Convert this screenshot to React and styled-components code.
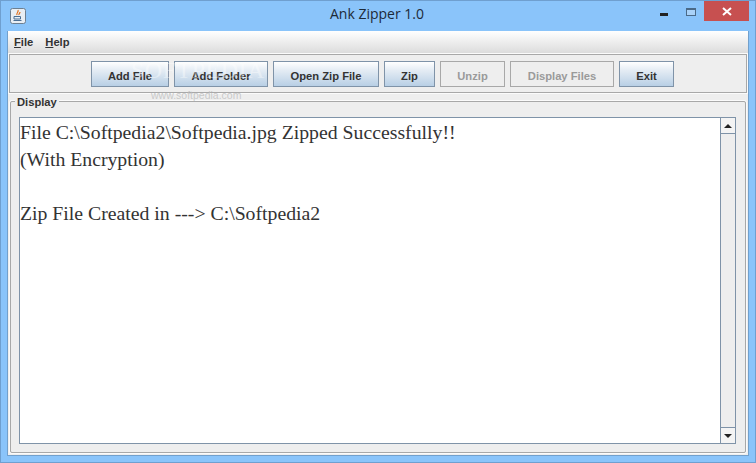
import { createGlobalStyle } from "styled-components";
import styled from "styled-components";

const Global = createGlobalStyle`
  html, body {
    margin: 0;
    padding: 0;
    background: #8ac3f9;
  }
  * {
    box-sizing: border-box;
  }
`;

const Win = styled.div`
  position: relative;
  width: 756px;
  height: 463px;
  display: flex;
  flex-direction: column;
  background: #8ac4fa;
  border: 1px solid #6f9fcf;
  overflow: hidden;
`;
const TitleBar = styled.div`
  position: relative;
  height: 30px;
  flex: none;
  display: flex;
  align-items: center;
  justify-content: center;
  padding: 0 2px 6px 0;
  font-family: "Open Sans", "Liberation Sans", sans-serif;
  font-size: 14px;
  color: #1d2a38;
`;
const AppIcon = styled.svg`
  position: absolute;
  left: 9px;
  top: 7px;
`;
const Controls = styled.div`
  position: absolute;
  right: 6px;
  top: 0;
  display: flex;
  align-items: flex-start;
`;
const Minimize = styled.div`
  width: 8px;
  height: 3px;
  margin: 12px 18px 0 0;
  background: #222;
`;
const Maximize = styled.div`
  width: 10px;
  height: 8px;
  margin: 7px 8px 0 0;
  border: 1px solid #4a6a88;
  border-top-width: 2px;
  background: #a9d2f8;
`;
const Close = styled.div`
  width: 45px;
  height: 20px;
  display: flex;
  align-items: center;
  justify-content: center;
  background: #c75050;
`;
const Content = styled.div`
  flex: 1;
  margin: 0 6px 6px 6px;
  display: flex;
  flex-direction: column;
  background: #eeeeee;
  border: 1px solid #72a0cc;
  font-family: "Liberation Sans", sans-serif;
  border-width: 0 1px 1px 1px;
`;
const MenuBar = styled.div`
  height: 22px;
  flex: none;
  display: flex;
  align-items: center;
  gap: 12px;
  padding-left: 6px;
  background: linear-gradient(#ffffff, #dcdcdc);
`;
const MenuItem = styled.span`
  font-size: 11.2px;
  font-weight: bold;
  color: #333;
  u {
    text-decoration-thickness: 1px;
  }
`;
const ToolBar = styled.div`
  height: 39px;
  flex: none;
  margin: 1px 1px 0 1px;
  display: flex;
  align-items: flex-start;
  gap: 5px;
  padding: 6px 0 0 81px;
  border: 1px solid #a8a8a8;
  box-shadow: 0 0 0 1px #fbfbfb;
`;
const Btn = styled.div`
  width: ${(p) => p.$w}px;
  height: 26px;
  padding-top: 4px;
  display: flex;
  align-items: center;
  justify-content: center;
  font-size: 11.2px;
  font-weight: bold;
  color: ${(p) => (p.$off ? "#9a9a9a" : "#333")};
  border: 1px solid ${(p) => (p.$off ? "#a8a8a8" : "#7f93a8")};
  background: ${(p) =>
    p.$off ? "#eeeeee" : "linear-gradient(#ffffff 0%, #e4ecf4 35%, #b8cfe5 100%)"};
`;
const DisplayBox = styled.div`
  position: relative;
  flex: 1;
  margin: 8px 2px 2px 2px;
  padding: 15px 9px 8px 8px;
  display: flex;
  border: 1px solid #a8a8a8;
  border-radius: 2px;
  box-shadow: 0 0 0 1px #fbfbfb;
`;
const Legend = styled.span`
  position: absolute;
  left: 4px;
  top: -6px;
  padding: 0 2px;
  background: #eeeeee;
  font-size: 11.2px;
  font-weight: bold;
  color: #333;
`;
const TextArea = styled.div`
  flex: 1;
  display: flex;
  background: #fff;
  border: 1px solid #7f93a8;
  border-width: 1px 0 1px 1px;
`;
const Editor = styled.div`
  flex: 1;
  padding-top: 1px;
  font-family: "Liberation Serif", serif;
  font-size: 19.75px;
  line-height: 27px;
  color: #333;
  white-space: pre;
`;
const ScrollBar = styled.div`
  width: 16px;
  display: flex;
  flex-direction: column;
  background: #eeeeee;
  border: 1px solid #7f93a8;
  border-width: 0 1px 0 1px;
`;
const ScrollBtn = styled.div`
  height: 16px;
  flex: none;
  display: flex;
  align-items: center;
  justify-content: center;
  background: #f4f4f4;
  border-bottom: ${(p) => (p.$top ? "1px solid #7f93a8" : "none")};
  border-top: ${(p) => (p.$top ? "none" : "1px solid #7f93a8")};
`;
const Track = styled.div`
  flex: 1;
`;
const Arrow = styled.div`
  width: 0;
  height: 0;
  border-left: 4px solid transparent;
  border-right: 4px solid transparent;
  ${(p) => (p.$up ? "border-bottom: 4px solid #222;" : "border-top: 4px solid #222;")}
`;
const Watermark = styled.div`
  position: absolute;
  left: 130px;
  top: 56px;
  font-family: "Liberation Serif", serif;
  font-size: 24px;
  letter-spacing: 0.5px;
  color: rgba(255, 255, 255, 0.4);
  pointer-events: none;
`;
const WatermarkUrl = styled.div`
  position: absolute;
  left: 150px;
  top: 88px;
  font-family: "Liberation Sans", sans-serif;
  font-size: 10.5px;
  color: rgba(190, 190, 190, 0.8);
  pointer-events: none;
`;

const buttons = [
  { label: "Add File", w: 78 },
  { label: "Add Folder", w: 94 },
  { label: "Open Zip File", w: 106 },
  { label: "Zip", w: 51 },
  { label: "Unzip", w: 65, off: true },
  { label: "Display Files", w: 104, off: true },
  { label: "Exit", w: 55 },
];

const text = `File C:\\Softpedia2\\Softpedia.jpg Zipped Successfully!!
(With Encryption)

Zip File Created in ---> C:\\Softpedia2`;

export default function App() {
  return (
    <>
      <Global />
      <Win>
        <TitleBar>
          <AppIcon width="16" height="16" viewBox="0 0 16 16">
            <rect x="0.5" y="0.5" width="15" height="15" rx="2" fill="#e8eef4" stroke="#6d7f90" />
            <path d="M8 2c1 2-2 3-1 5M10 4c0 1.500-1.500 2-1 3" stroke="#e0701c" strokeWidth="1.2" fill="none" />
            <path d="M4 8.500h6.500v2.500H4zM3.500 12.500h8" stroke="#4a6f94" strokeWidth="1" fill="none" />
          </AppIcon>
          Ank Zipper 1.0
          <Controls>
            <Minimize />
            <Maximize />
            <Close>
              <svg width="10" height="9" viewBox="0 0 10 9">
                <path d="M1 1l8 7M9 1L1 8" stroke="#fff" strokeWidth="2" />
              </svg>
            </Close>
          </Controls>
        </TitleBar>
        <Content>
          <MenuBar>
            <MenuItem><u>F</u>ile</MenuItem>
            <MenuItem><u>H</u>elp</MenuItem>
          </MenuBar>
          <ToolBar>
            {buttons.map((b) => (
              <Btn key={b.label} $w={b.w} $off={b.off}>{b.label}</Btn>
            ))}
          </ToolBar>
          <DisplayBox>
            <Legend>Display</Legend>
            <TextArea>
              <Editor>{text}</Editor>
              <ScrollBar>
                <ScrollBtn $top><Arrow $up /></ScrollBtn>
                <Track />
                <ScrollBtn><Arrow /></ScrollBtn>
              </ScrollBar>
            </TextArea>
          </DisplayBox>
        </Content>
        <Watermark>SOFTPEDIA</Watermark>
        <WatermarkUrl>www.softpedia.com</WatermarkUrl>
      </Win>
    </>
  );
}
